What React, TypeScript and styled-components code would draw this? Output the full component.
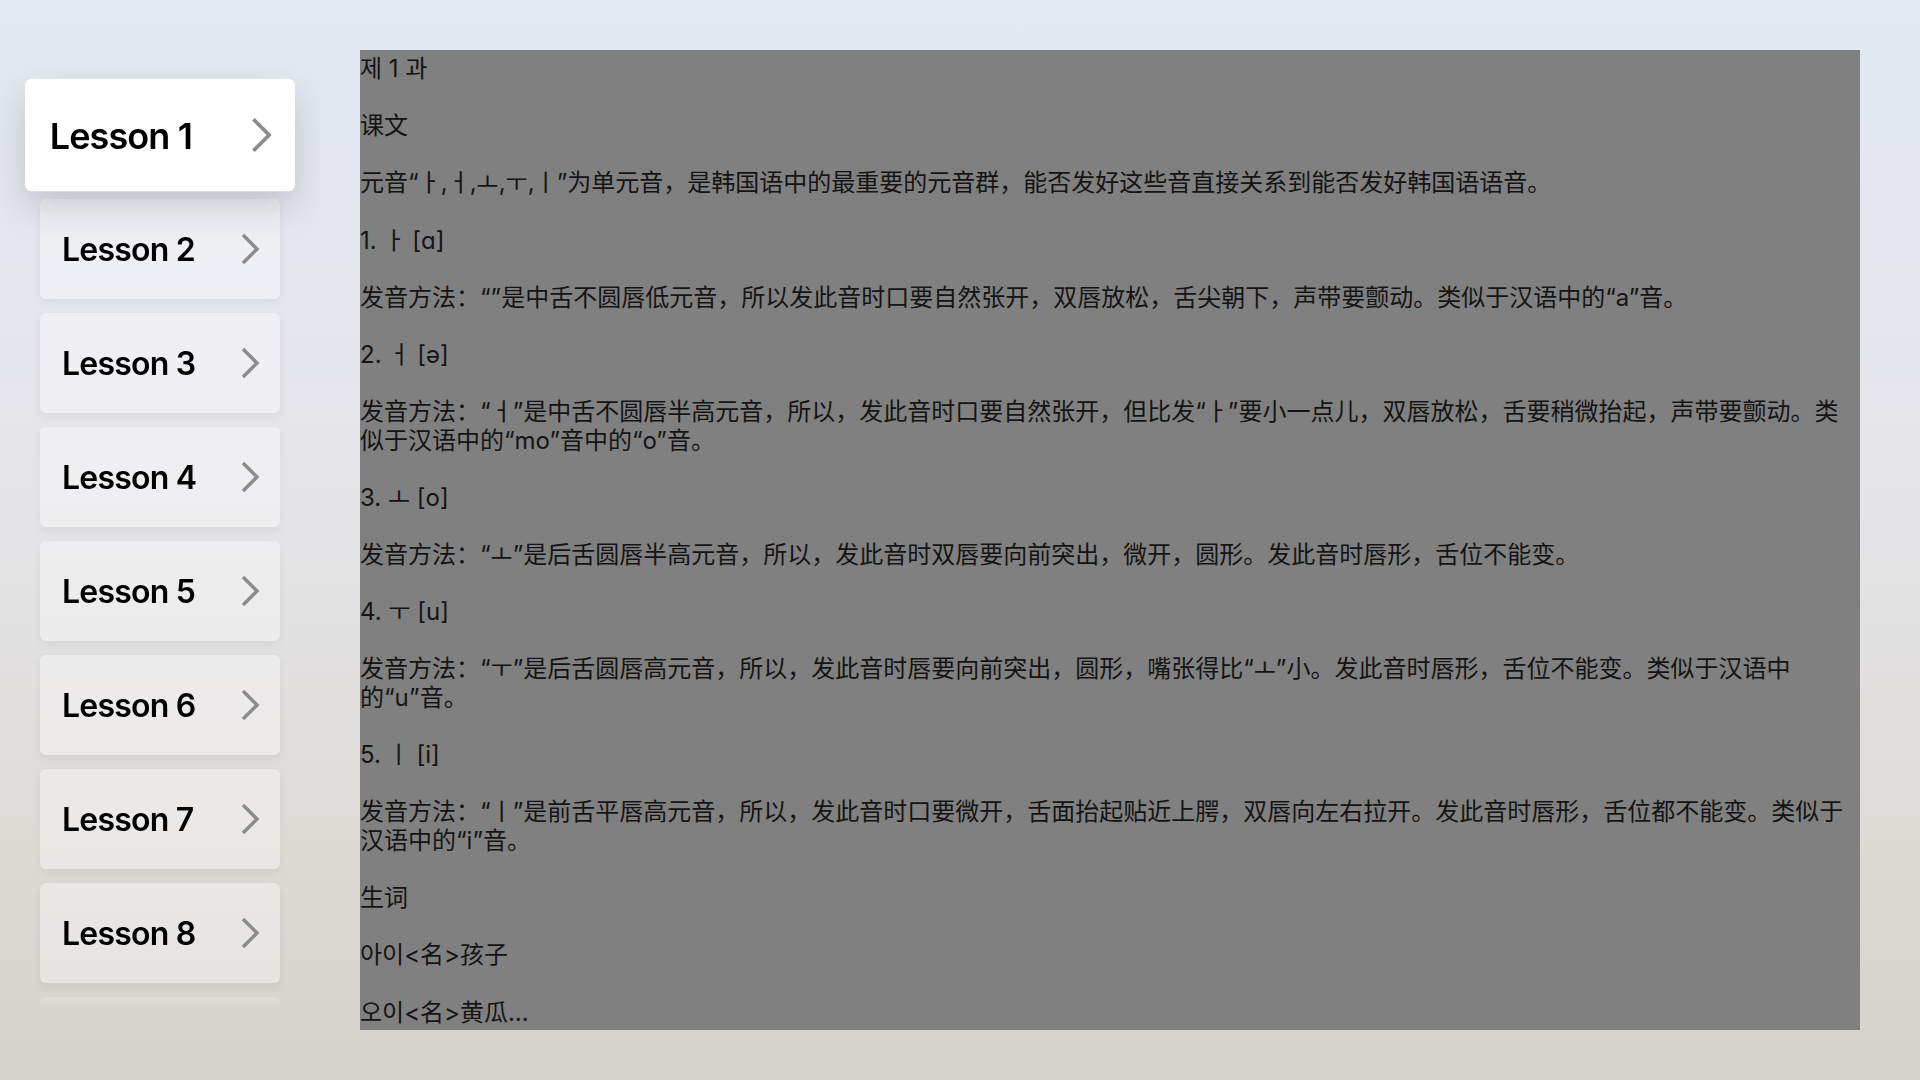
import styled, { createGlobalStyle, css } from 'styled-components'

const GlobalStyle = createGlobalStyle`
  html, body {
    margin: 0;
    padding: 0;
    height: 100%;
    overflow: hidden;
  }
  body {
    font-family: Inter, "Noto Sans CJK SC", sans-serif;
    background: linear-gradient(180deg, #e3e8f2 0%, #e6e6ea 42%, #dddad6 78%, #d5d2cd 100%);
  }
`

const Screen = styled.div`
  width: 1920px;
  height: 1080px;
  box-sizing: border-box;
  display: flex;
  align-items: flex-start;
  gap: 40px;
  padding: 50px 60px 50px 0;
`

// wide box so the focused card's scale and shadow are not cut by the mask
const Sidebar = styled.nav`
  width: 320px;
  flex-shrink: 0;
  height: 1030px;
  box-sizing: border-box;
  padding: 35px 40px 0;
  display: flex;
  flex-direction: column;
  gap: 14px;
  -webkit-mask-image: linear-gradient(180deg, #000 0, #000 936px, transparent 958px);
  mask-image: linear-gradient(180deg, #000 0, #000 936px, transparent 958px);
`

const LessonCard = styled.div<{ $focused?: boolean }>`
  flex-shrink: 0;
  height: 100px;
  box-sizing: border-box;
  padding: 0 21px 0 22px;
  display: flex;
  align-items: center;
  justify-content: space-between;
  border-radius: 6px;
  background: rgba(255, 255, 255, 0.38);
  box-shadow: 0 4px 10px rgba(0, 0, 0, 0.05);
  font-size: 32px;
  font-weight: 600;
  color: #000;
  letter-spacing: -0.8px;

  ${(p) =>
    p.$focused &&
    css`
      background: #fff;
      transform: scale(1.125);
      box-shadow: 0 14px 34px rgba(0, 0, 0, 0.16);
      position: relative;
      z-index: 1;
    `}
`

const Chevron = styled.svg`
  width: 18px;
  height: 32px;
  flex-shrink: 0;
`

const ContentPanel = styled.main`
  width: 1500px;
  height: 980px;
  box-sizing: border-box;
  flex-shrink: 0;
  background: #808080;
  overflow: hidden;
  color: #141414;
  font-size: 24px;
  line-height: 28.6px;
  padding-top: 5px;
`

const Para = styled.p`
  margin: 0 0 28.6px;
`

const lessons = [1, 2, 3, 4, 5, 6, 7, 8, 9]

function ChevronIcon() {
  return (
    <Chevron viewBox="0 0 18 32">
      <polyline points="2,2 16,16 2,30" fill="none" stroke="#8c8c8c" strokeWidth="3.4" />
    </Chevron>
  )
}

export default function App() {
  return (
    <>
      <GlobalStyle />
      <Screen>
        <Sidebar>
          {lessons.map((n) => (
            <LessonCard key={n} $focused={n === 1}>
              <span>Lesson {n}</span>
              <ChevronIcon />
            </LessonCard>
          ))}
        </Sidebar>
        <ContentPanel>
          <Para>제 1 과</Para>
          <Para>课文</Para>
          <Para>元音“ㅏ,ㅓ,ㅗ,ㅜ,ㅣ”为单元音，是韩国语中的最重要的元音群，能否发好这些音直接关系到能否发好韩国语语音。</Para>
          <Para>1. ㅏ [ɑ]</Para>
          <Para>发音方法：“”是中舌不圆唇低元音，所以发此音时口要自然张开，双唇放松，舌尖朝下，声带要颤动。类似于汉语中的“a”音。</Para>
          <Para>2. ㅓ [ə]</Para>
          <Para>
            发音方法：“ㅓ”是中舌不圆唇半高元音，所以，发此音时口要自然张开，但比发“ㅏ”要小一点儿，双唇放松，舌要稍微抬起，声带要颤动。类
            <br />
            似于汉语中的“mo”音中的“o”音。
          </Para>
          <Para>3. ㅗ [o]</Para>
          <Para>发音方法：“ㅗ”是后舌圆唇半高元音，所以，发此音时双唇要向前突出，微开，圆形。发此音时唇形，舌位不能变。</Para>
          <Para>4. ㅜ [u]</Para>
          <Para>
            发音方法：“ㅜ”是后舌圆唇高元音，所以，发此音时唇要向前突出，圆形，嘴张得比“ㅗ”小。发此音时唇形，舌位不能变。类似于汉语中
            <br />
            的“u”音。
          </Para>
          <Para>5. ㅣ [i]</Para>
          <Para>
            发音方法：“ㅣ”是前舌平唇高元音，所以，发此音时口要微开，舌面抬起贴近上腭，双唇向左右拉开。发此音时唇形，舌位都不能变。类似于
            <br />
            汉语中的“i”音。
          </Para>
          <Para>生词</Para>
          <Para>아이&lt;名&gt;孩子</Para>
          <Para>오이&lt;名&gt;黄瓜...</Para>
        </ContentPanel>
      </Screen>
    </>
  )
}
